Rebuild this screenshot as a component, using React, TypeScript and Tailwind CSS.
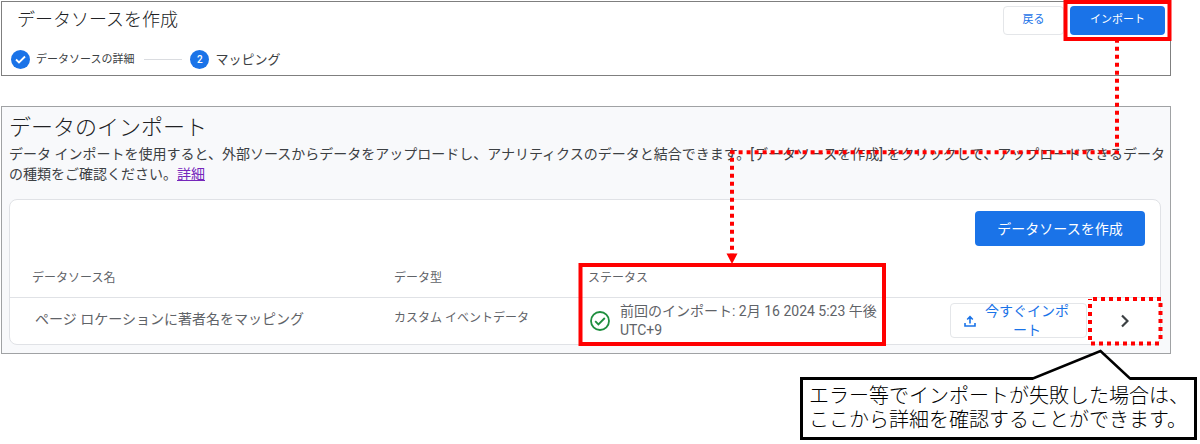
import React from 'react';

const Annotations: React.FC = () => (
  <svg
    className="absolute top-0 right-0 pointer-events-none"
    width="1200"
    height="444"
    viewBox="0 0 1200 444"
    fill="none"
    aria-hidden="true"
  >
    {/* Highlight boxes */}
    <rect x="1065.5" y="2" width="104" height="37" stroke="#ff0000" strokeWidth="4" />
    <rect x="580.5" y="265" width="303.5" height="79" stroke="#ff0000" strokeWidth="4" />
    <path
      d="M1093 299H1163M1160.5 303V343M1159 343.5H1090M1090 340V299"
      stroke="#ff0000"
      strokeWidth="4"
      strokeDasharray="4 4"
    />

    {/* Connector */}
    <path d="M1117 38.7V152.3H732V254" stroke="#ff0000" strokeWidth="4" strokeDasharray="4 4" />
    <path d="M726.5 253.5h11L732 264z" fill="#ff0000" />

    {/* Callout pointer */}
    <path d="M1033 381V378.5L1100.5 351L1130 378.5V381z" fill="#ffffff" />
    <path d="M1031 378.5H1033L1100.5 351L1130 378.5H1132" stroke="#000000" strokeWidth="2.5" />
  </svg>
);

const CreateSourcePanel: React.FC = () => (
  <section className="mt-px h-[75px] border border-[#7f7f7f] bg-white pt-1 pr-[5px]">
    <div className="flex items-start justify-between">
      <h2 className="pl-[15px] text-lg leading-7 font-light text-[#202124]">データソースを作成</h2>
      <div className="flex gap-[6px] text-[11px]">
        <button className="h-[29px] w-[61px] rounded border border-[#e4e6e9] text-[#1a73e8]">戻る</button>
        <button className="h-[29px] w-[95px] rounded bg-[#1a73e8] text-white">インポート</button>
      </div>
    </div>
    <ol className="mt-[15px] flex items-center pl-[9px]">
      <li className="flex items-center gap-[6px] text-[11px]">
        <span className="flex size-[19px] items-center justify-center rounded-full bg-[#1a73e8]">
          <svg width="11" height="9" viewBox="0 0 11 9" fill="none" aria-hidden="true">
            <path d="M1 4.5L4 7.5L10 1.5" stroke="#ffffff" strokeWidth="1.8" />
          </svg>
        </span>
        データソースの詳細
      </li>
      <li className="mr-2 ml-[10px] h-px w-[38px] bg-[#dadce0]" aria-hidden="true" />
      <li className="flex items-center gap-[6px] text-[13px]">
        <span className="flex size-[19px] items-center justify-center rounded-full bg-[#1a73e8] text-[10px] font-medium text-white">
          2
        </span>
        マッピング
      </li>
    </ol>
  </section>
);

const SourceTable: React.FC = () => (
  <table className="w-full table-fixed border-collapse text-left text-xs text-[#5f6368]">
    <colgroup>
      <col />
      <col className="w-[194px]" />
      <col className="w-[362px]" />
      <col className="w-[140px]" />
      <col className="w-[70px]" />
    </colgroup>
    <thead>
      <tr className="h-[40px] border-b border-[#e0e2e6]">
        <th className="pt-[3px] pl-[22px] font-normal">データソース名</th>
        <th className="pt-[3px] font-normal">データ型</th>
        <th className="pt-[3px] font-normal">ステータス</th>
        <th />
        <th />
      </tr>
    </thead>
    <tbody>
      <tr className="h-[47px]">
        <td className="pb-[3px] pl-[25px] text-sm">ページ ロケーションに著者名をマッピング</td>
        <td className="pb-[5px]">カスタム イベントデータ</td>
        <td>
          <div className="flex items-center gap-[10px] pl-[2px]">
            <svg width="20" height="20" viewBox="0 0 20 20" fill="none" aria-hidden="true">
              <circle cx="10" cy="10" r="9" stroke="#1e8e3e" strokeWidth="1.8" />
              <path d="M5.2 10.2L8.4 13.4L14.8 7" stroke="#1e8e3e" strokeWidth="1.8" />
            </svg>
            <p className="w-[260px] text-sm leading-[19px]">前回のインポート: 2月 16 2024 5:23 午後 UTC+9</p>
          </div>
        </td>
        <td>
          <button className="flex h-[35px] w-[137px] items-center gap-2 rounded border border-[#e4e6e9] pl-[13px] text-sm leading-[19px] text-[#1a73e8]">
            <svg className="shrink-0" width="12" height="12" viewBox="0 0 12 12" fill="none" aria-hidden="true">
              <path d="M6 8.5V2M3.2 4.5L6 1.7L8.8 4.5M1 8V11H11V8" stroke="#1a73e8" strokeWidth="1.6" />
            </svg>
            <span className="w-[86px] break-all text-center">今すぐインポート</span>
          </button>
        </td>
        <td>
          <button className="flex w-full justify-center" aria-label="詳細を表示">
            <svg width="8" height="14" viewBox="0 0 8 14" fill="none" aria-hidden="true">
              <path d="M1 1.5L6.5 7L1 12.5" stroke="#3c4043" strokeWidth="2.2" />
            </svg>
          </button>
        </td>
      </tr>
    </tbody>
  </table>
);

const DataImportPanel: React.FC = () => (
  <section className="mt-[30px] border border-[#a0a2a4] bg-[#f8f9fb] px-[7px] pt-[5px] pb-2">
    <h1 className="text-[22px] leading-[32px] font-light text-[#202124]">データのインポート</h1>
    <p className="text-sm leading-[20px] whitespace-nowrap">
      データ インポートを使用すると、外部ソースからデータをアップロードし、アナリティクスのデータと結合できます。[データソースを作成] をクリックして、アップロードできるデータ
      <br />
      の種類をご確認ください。
      <a href="#details" className="text-[#7627bb] underline">詳細</a>
    </p>
    <div className="mt-[15px] mr-[2px] rounded-lg border border-[#e0e2e6] bg-white">
      <div className="flex justify-end pt-[11px] pr-[15px] pb-[11px]">
        <button className="h-[35px] w-[170px] rounded bg-[#1a73e8] text-sm text-white">データソースを作成</button>
      </div>
      <SourceTable />
    </div>
  </section>
);

const App: React.FC = () => {
  return (
    <main
      lang="ja"
      className="relative overflow-hidden bg-white pb-[3px] text-[#3c4043]"
      style={{ fontFamily: 'Roboto, "Noto Sans CJK JP", sans-serif' }}
    >
      <div className="mr-[29px] ml-px">
        <CreateSourcePanel />
        <DataImportPanel />
      </div>
      <aside className="mt-[23px] mr-[3px] ml-auto w-[397px] border-[3px] border-black bg-white px-[6px] pt-1 pb-[5px] text-xl leading-[24px] font-light whitespace-nowrap text-black">
        エラー等でインポートが失敗した場合は、
        <br />
        ここから詳細を確認することができます。
      </aside>
      <Annotations />
    </main>
  );
};

export default App;
